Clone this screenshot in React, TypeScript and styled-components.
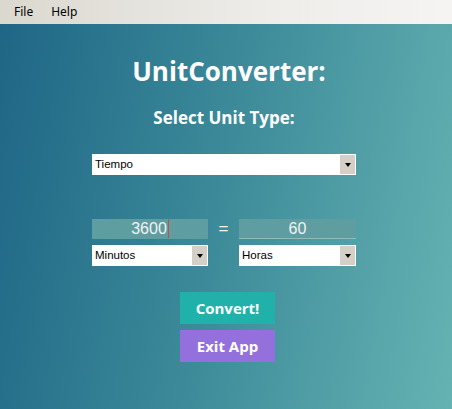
import styled, { createGlobalStyle } from "styled-components";

const GlobalStyle = createGlobalStyle`
  * {
    box-sizing: border-box;
  }
  body {
    margin: 0;
    font-family: "Noto Sans", "Open Sans", sans-serif;
  }
`;

const units = { left: "Minutos", right: "Horas" };

const Dropdown = ({ value, width }: { value: string; width: number }) => (
  <Combo $width={width}>
    <ComboText>{value}</ComboText>
    <ComboButton>
      <Arrow />
    </ComboButton>
  </Combo>
);

const App = () => {
  return (
    <>
      <GlobalStyle />
      <Window>
        <MenuBar>
          <MenuItem>File</MenuItem>
          <MenuItem>Help</MenuItem>
        </MenuBar>
        <Content>
          <Title>UnitConverter:</Title>
          <Subtitle>Select Unit Type:</Subtitle>
          <Dropdown value="Tiempo" width={264} />
          <ConvertGrid>
            <ValueBox>
              3600
              <Caret />
            </ValueBox>
            <Equals>=</Equals>
            <ValueBox $underline>60</ValueBox>
            <Dropdown value={units.left} width={116} />
            <span />
            <Dropdown value={units.right} width={117} />
          </ConvertGrid>
          <Actions>
            <ActionButton $color="#20b2aa">Convert!</ActionButton>
            <ActionButton $color="#9370db">Exit App</ActionButton>
          </Actions>
        </Content>
      </Window>
    </>
  );
};

const Window = styled.div`
  width: 452px;
  height: 409px;
  display: flex;
  flex-direction: column;
  overflow: hidden;
`;

const MenuBar = styled.div`
  height: 24px;
  display: flex;
  align-items: center;
  gap: 4px;
  padding-left: 7px;
  background: linear-gradient(90deg, #dbd8cf 0%, #eeedea 60%, #f5f4f2 100%);
`;

const MenuItem = styled.div`
  font-family: "Noto Sans", sans-serif;
  font-size: 12px;
  color: #000;
  padding: 0 7px;
  line-height: 20px;
`;

const Content = styled.div`
  flex: 1;
  display: flex;
  flex-direction: column;
  align-items: center;
  padding-top: 32px;
  padding-right: 4px;
  background: linear-gradient(100deg, #1f6686 0%, #3a8898 45%, #66b3b3 100%);
`;

const Title = styled.div`
  font-family: "Open Sans", sans-serif;
  font-weight: 700;
  font-size: 26px;
  line-height: 30px;
  color: #fff;
  margin-left: 10px;
`;

const Subtitle = styled.div`
  font-family: "Open Sans", sans-serif;
  font-weight: 700;
  font-size: 17px;
  line-height: 22px;
  color: #fff;
  margin-top: 21px;
  margin-bottom: 25px;
`;

const Combo = styled.div<{ $width: number }>`
  width: ${(p) => p.$width}px;
  height: 21px;
  background: #fff;
  display: flex;
  align-items: stretch;
  padding: 1px;
`;

const ComboText = styled.div`
  flex: 1;
  font-family: "Liberation Sans", Arial, sans-serif;
  font-size: 11.5px;
  line-height: 19px;
  color: #000;
  padding-left: 2px;
`;

const ComboButton = styled.div`
  width: 15px;
  background: #d4d0c8;
  display: flex;
  align-items: center;
  justify-content: center;
`;

const Arrow = styled.div`
  width: 0;
  height: 0;
  border-left: 3.5px solid transparent;
  border-right: 3.5px solid transparent;
  border-top: 4px solid #000;
  margin-top: 1px;
`;

const ConvertGrid = styled.div`
  margin-top: 44px;
  display: grid;
  grid-template-columns: 116px 31px 117px;
  grid-template-rows: 20px 21px;
  row-gap: 6px;
`;

const ValueBox = styled.div<{ $underline?: boolean }>`
  position: relative;
  background: #5f9ea0;
  color: #f2f2f2;
  font-family: "Liberation Sans", Arial, sans-serif;
  font-size: 16px;
  line-height: 20px;
  text-align: center;
  border-bottom: ${(p) => (p.$underline ? "1px solid #8cbcbc" : "none")};
`;

const Caret = styled.span`
  display: inline-block;
  width: 1px;
  height: 19px;
  background: #c0504d;
  vertical-align: top;
  margin-left: 1px;
`;

const Equals = styled.div`
  color: #f2f2f2;
  font-family: "Liberation Sans", Arial, sans-serif;
  font-size: 17px;
  line-height: 20px;
  text-align: center;
`;

const Actions = styled.div`
  margin-top: 26px;
  margin-left: 7px;
  display: flex;
  flex-direction: column;
  gap: 6px;
`;

const ActionButton = styled.div<{ $color: string }>`
  width: 95px;
  height: 32px;
  background: ${(p) => p.$color};
  color: #fff;
  font-family: "Open Sans", sans-serif;
  font-weight: 700;
  font-size: 15px;
  display: flex;
  align-items: center;
  justify-content: center;
`;

export default App;
